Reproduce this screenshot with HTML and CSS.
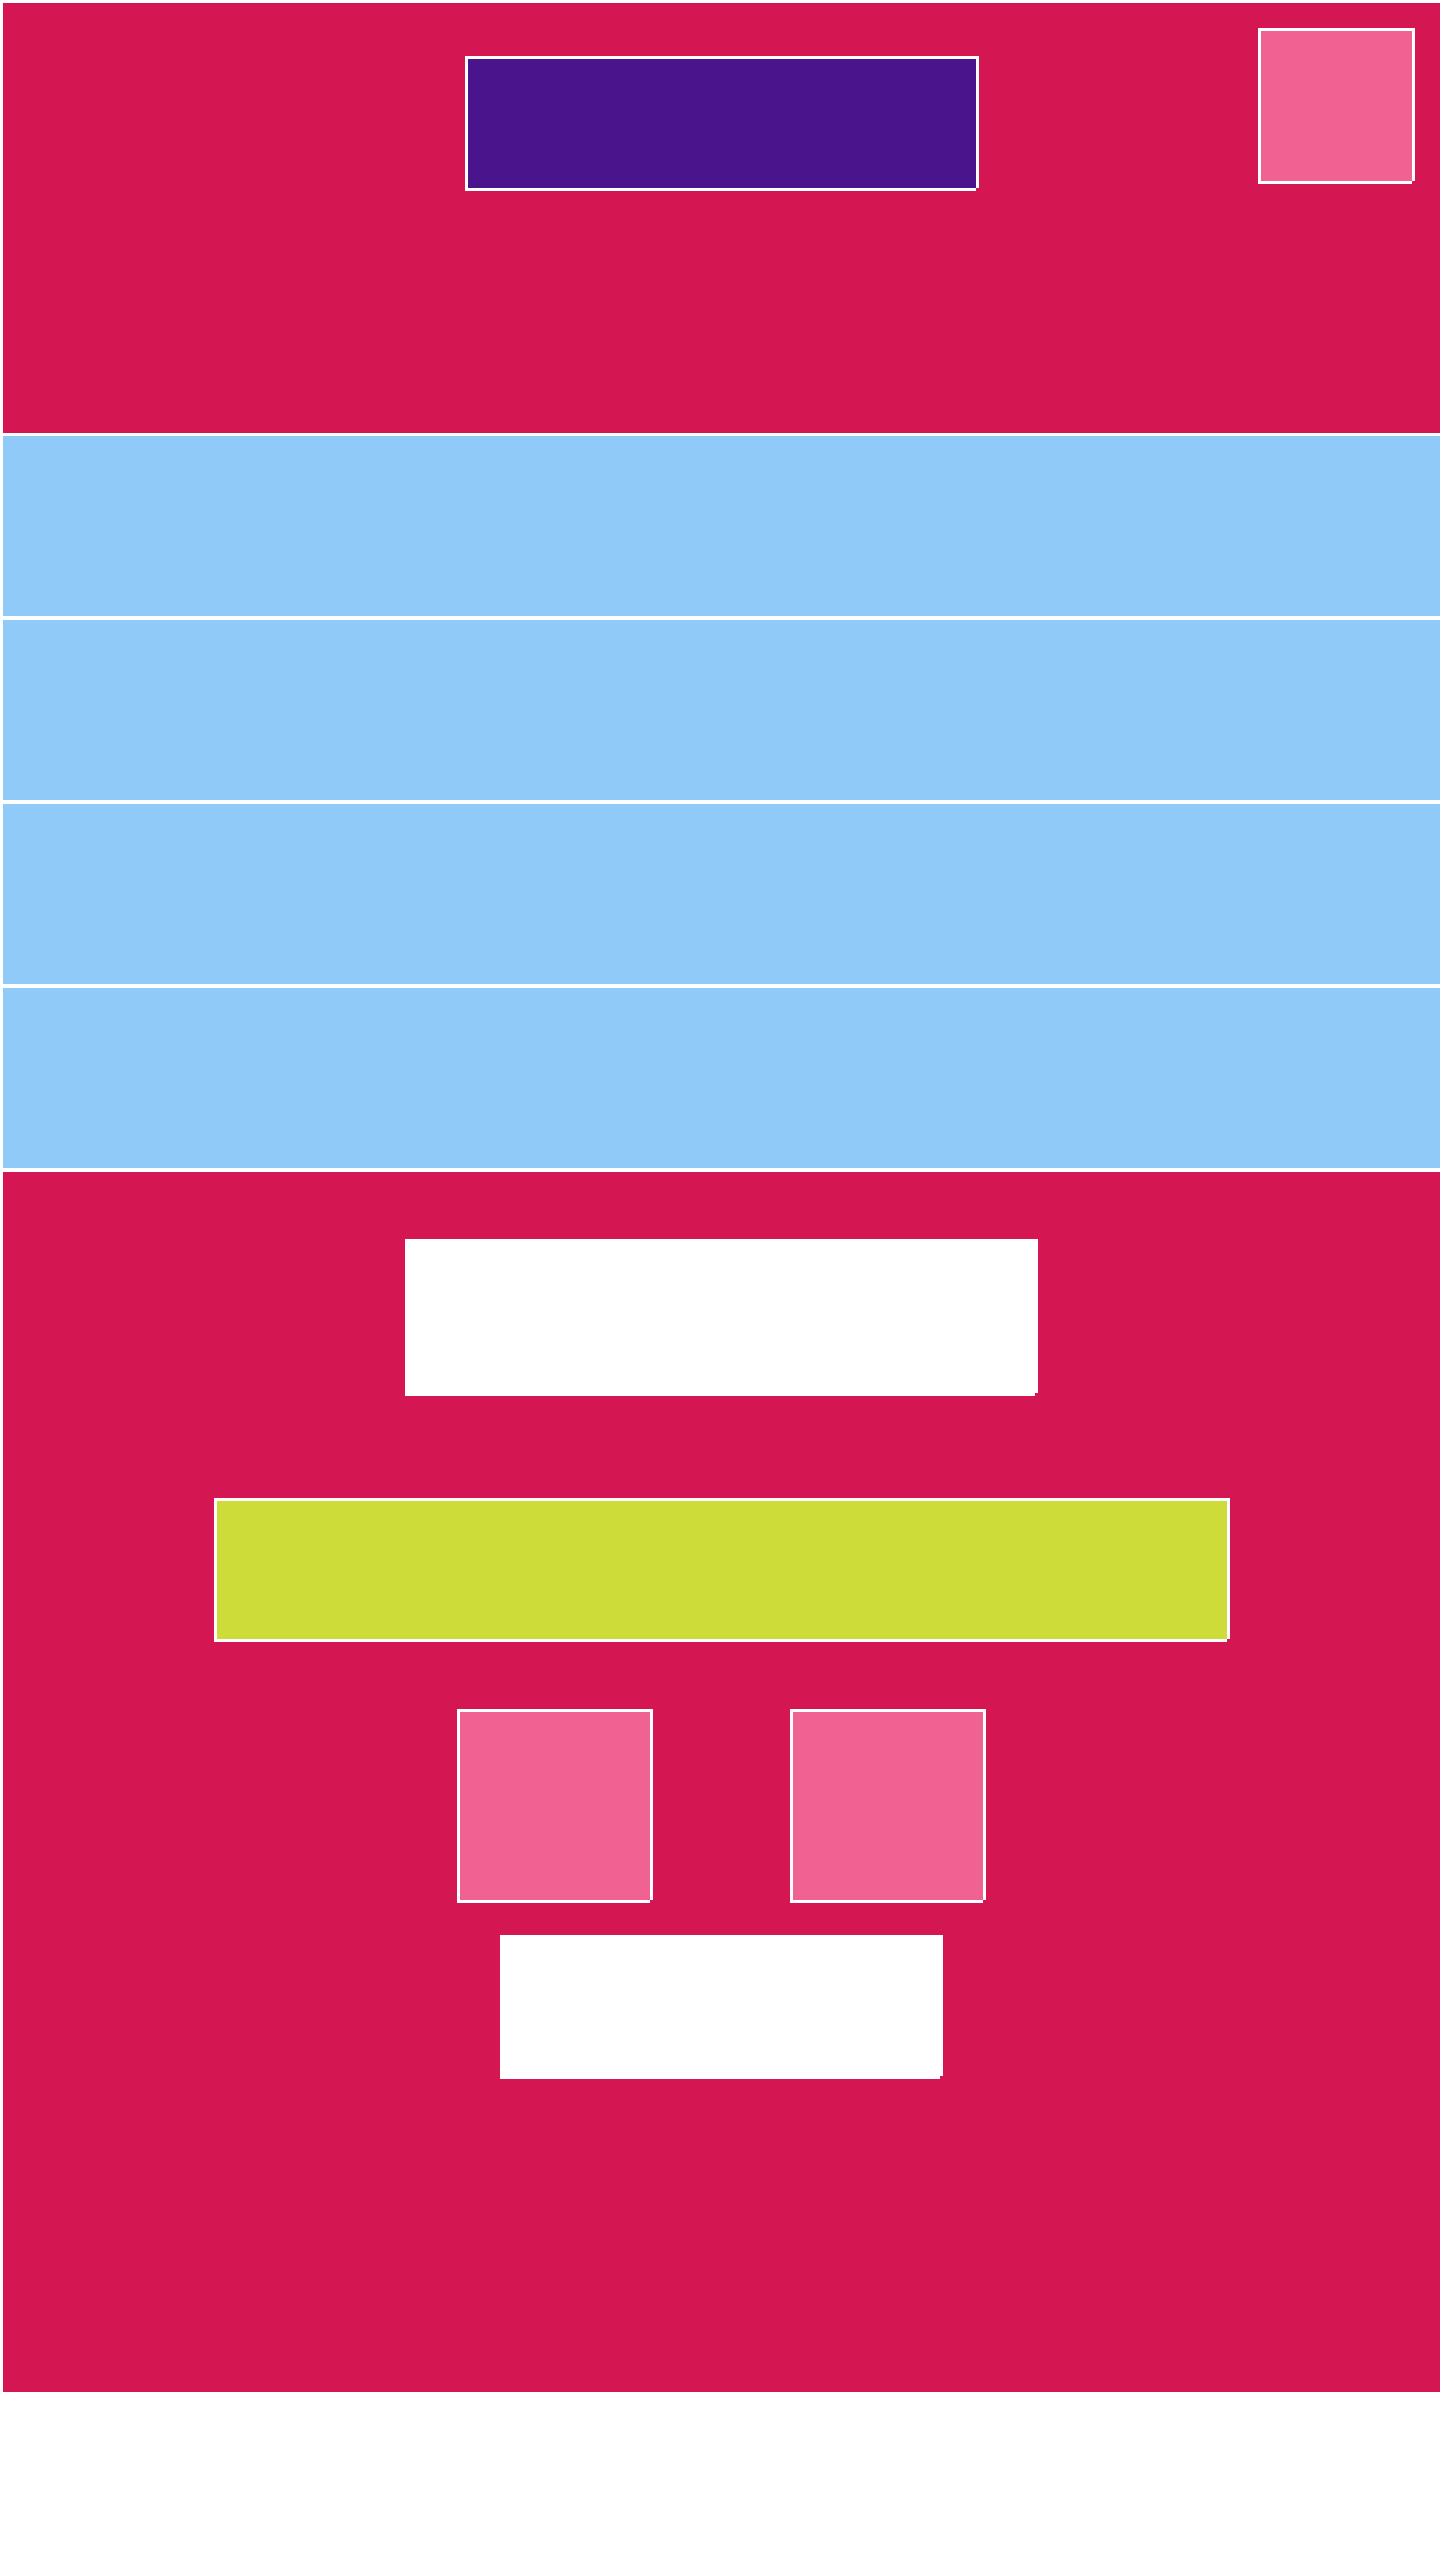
FILE: index.html
```html
<!DOCTYPE html>
<html lang="en">
<head>
<meta charset="utf-8">
<title>Layout</title>
<link rel="stylesheet" href="styles.css">
</head>
<body>
<div class="page">
  <header class="hero">
    <div class="box logo"></div>
    <div class="box corner"></div>
  </header>
  <section class="row"></section>
  <section class="row"></section>
  <section class="row"></section>
  <section class="row"></section>
  <section class="panel">
    <div class="box title"></div>
    <div class="box bar"></div>
    <div class="pair">
      <div class="box tile"></div>
      <div class="box tile"></div>
    </div>
    <div class="box cta"></div>
  </section>
</div>
</body>
</html>
```

FILE: styles.css
```css
* { box-sizing: border-box; }

html, body {
  margin: 0;
  background: #ffffff;
  font-family: "Liberation Sans", Arial, sans-serif;
}

body {
  padding: 3px 0 0 3px;
}

.page {
  width: 1437px;
  display: flex;
  flex-direction: column;
}

.box {
  position: relative;
  border: 3px solid #ffffff;
}

.box::after {
  content: "";
  position: absolute;
  right: -3px;
  bottom: -3px;
  width: 3px;
  height: 3px;
  background: #d41652;
}

.hero {
  position: relative;
  height: 430px;
  background: #d41652;
  display: flex;
  flex-direction: column;
  align-items: center;
  padding-top: 53px;
}

.logo {
  width: 514px;
  height: 135px;
  background: #4a148c;
}

.corner {
  position: absolute;
  top: 25px;
  right: 25px;
  width: 157px;
  height: 156px;
  background: #f06292;
}

.row {
  height: 180px;
  background: #90caf9;
  margin-top: 4px;
}

.hero + .row {
  margin-top: 3px;
}

.panel {
  margin-top: 4px;
  height: 1220px;
  background: #d41652;
  display: flex;
  flex-direction: column;
  align-items: center;
  padding-top: 67px;
}

.title {
  width: 633px;
  height: 157px;
  background: #ffffff;
}

.bar {
  margin-top: 102px;
  width: 1016px;
  height: 144px;
  background: #cddc39;
}

.pair {
  margin-top: 67px;
  display: flex;
  gap: 137px;
}

.tile {
  width: 196px;
  height: 194px;
  background: #f06292;
}

.cta {
  margin-top: 32px;
  width: 443px;
  height: 144px;
  background: #ffffff;
}
```
